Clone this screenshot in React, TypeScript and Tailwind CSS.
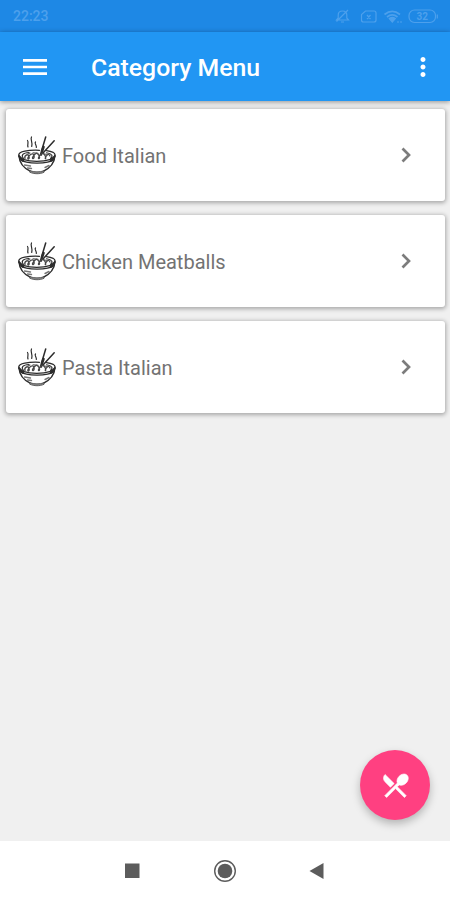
import { MdMenu, MdMoreVert } from 'react-icons/md';

const categories = [
  { id: 1, name: 'Food Italian' },
  { id: 2, name: 'Chicken Meatballs' },
  { id: 3, name: 'Pasta Italian' },
];

function NoodleBowl() {
  return (
    <svg width="40" height="42" viewBox="0 0 40 42" fill="none" stroke="#2c2c2c" strokeLinecap="round" className="shrink-0">
      {/* steam */}
      <path d="M10.500 6.500c1.500 2-.5 4 .5 6.500M14.500 3c-1.500 2.500 1.500 5 .2 9.500M18.500 8c-1.500 1.500 1.500 3 .8 5.500" strokeWidth="1.200" />
      {/* chopsticks */}
      <path d="M28.700 3 L24.500 17M37.200 6.800 L26 19" strokeWidth="1.500" />
      <path d="M26.500 13 L24 20.500" strokeWidth="2.500" />
      {/* rim */}
      <path d="M22.500 16.300C11 15.800 1.800 17.500 1.800 20.800c0 4.200 8 6.500 18 6.500s18.200-2.300 18.200-6.500c0-2.300-3.500-3.400-8.500-4.100" strokeWidth="1.300" />
      <path d="M6.500 24.500C3.500 21 6 19 12 18.500M33.500 24.500c3-2.500 1.500-5-4-5.700" strokeWidth="1.100" />
      {/* noodles */}
      <path d="M8 24.500c-1-3 3-5.500 4-2s-2 3-1 1 5-6 6-2-3 4-1 1 4-5 6-1-2 4 0 1 4-5 6-1-1 4 1 1 3-2.500 4-.5" stroke="#444" strokeWidth="1.300" />
      <path d="M10 20.500l3-1.500M16 18.800l5 .4M27 20l4 .5" stroke="#555" strokeWidth="1.100" />
      {/* bowl */}
      <path d="M1.900 21.500c.5 7.500 5 13 12 16M38 21.500c-.5 7.500-5.500 13-12 16" strokeWidth="1.400" />
      <path d="M3 25.500c6 4.800 28 4.800 34 0" strokeWidth="1.300" />
      <path d="M2.300 22.500l4 4.500M37.600 22.500l-4 4.500" strokeWidth="2" />
      <path d="M13 36.800c4 1.400 10 1.400 14 0v1.500c-4 1.900-10 1.900-14 0z" fill="#888" stroke="#555" strokeWidth=".9" />
      <path d="M7.500 31l6 1M10.500 34l4 .5M28 33.500l4-2" stroke="#777" strokeWidth="1.400" />
    </svg>
  );
}

function StatusIcons() {
  return (
    <svg width="106" height="18" viewBox="0 0 106 18" fill="none" stroke="#4da0ec" strokeWidth="1.200" className="shrink-0">
      {/* muted bell */}
      <path d="M2.500 13h12l-1.700-2V8c0-2.500-1.500-4-4.300-4S4.200 5.500 4.200 8v3l-1.700 2zM7 15h3M2.500 14.500L14 3" />
      {/* missing sim */}
      <path d="M31.500 4H40c1.300 0 2 .6 2 2v7c0 1.300-.7 2-2 2h-10.500c-1.300 0-2-.7-2-2V7.500zM33 8l3.500 4M36.500 8L33 12" />
      {/* wifi */}
      <path d="M50.500 7.500c5-4 10.500-4 15.500 0M53 10c3.500-2.800 7-2.800 10.500 0" strokeWidth="1.700" />
      <path d="M55.300 11.500c2-1.500 4-1.500 6 0l-3 3.500z" fill="#4da0ec" />
      <path d="M63 15h5" strokeDasharray="2 1" />
      {/* battery */}
      <rect x="75" y="3" width="26.500" height="12.500" rx="5.500" />
      <path d="M103.300 7.500v4" />
      <text x="88.300" y="13" textAnchor="middle" fill="#4da0ec" stroke="none" className="font-['Roboto',sans-serif] text-[10px] font-bold">32</text>
    </svg>
  );
}

function ForkSpoon() {
  return (
    <svg width="31" height="31" viewBox="0 0 24 24" fill="currentColor" stroke="currentColor" strokeWidth="0.500" strokeLinejoin="round">
      <path d="M8.100 13.340l2.830-2.830L3.910 3.500c-1.560 1.560-1.560 4.090 0 5.660l4.190 4.180zm6.780-1.810c1.530.71 3.680.21 5.270-1.380 1.910-1.910 2.280-4.650.81-6.120-1.460-1.460-4.200-1.100-6.120.81-1.590 1.590-2.090 3.740-1.380 5.270L3.700 19.870l1.410 1.410L12 14.410l6.880 6.880 1.410-1.410L13.410 13l1.470-1.470z" />
    </svg>
  );
}

function CategoryCard({ name }: { name: string }) {
  return (
    <li className="flex h-[92px] items-center rounded-[3px] bg-white pr-[33px] pl-[11px] shadow-[0_1px_4px_1px_rgba(0,0,0,0.3)]">
      <NoodleBowl />
      <span className="ml-[5px] flex-1 pt-px text-[20px] leading-6 text-[#737373]">{name}</span>
      <svg width="12" height="18" viewBox="0 0 12 18" fill="none" stroke="#7c7c7c" strokeWidth="2.700">
        <path d="M2.500 2.500L9 9l-6.500 6.500" />
      </svg>
    </li>
  );
}

export default function App() {
  return (
    <div className="flex h-[900px] w-[450px] flex-col overflow-hidden bg-[#f0f0f0] font-['Roboto',sans-serif]">
      {/* Status bar */}
      <div className="flex h-8 shrink-0 items-center justify-between bg-[#1e88e5] pr-[10px] pl-[13px]">
        <span className="pt-px text-[14px] font-medium text-[#4da0ec]">22:23</span>
        <StatusIcons />
      </div>

      {/* App bar */}
      <header className="flex h-[69px] shrink-0 items-center bg-[#2196f3] pr-3 pl-[19px] text-white shadow-[0_1px_5px_rgba(0,0,0,0.4)]">
        <button aria-label="Menu">
          <MdMenu size={32} />
        </button>
        <h1 className="ml-10 flex-1 pt-[3px] text-[24.8px] leading-8 font-medium">Category Menu</h1>
        <button aria-label="More">
          <MdMoreVert size={30} />
        </button>
      </header>

      {/* Category list */}
      <main className="relative flex-1">
        <ul className="flex flex-col gap-[14px] pt-2 pr-[5px] pl-[6px]">
          {categories.map((category) => (
            <CategoryCard key={category.id} name={category.name} />
          ))}
        </ul>

        <button
          aria-label="Recipes"
          className="absolute right-5 bottom-[21px] flex size-[70px] items-center justify-center rounded-full bg-[#ff4081] text-white shadow-[0_4px_8px_rgba(0,0,0,0.25)]"
        >
          <ForkSpoon />
        </button>
      </main>

      {/* Navigation buttons */}
      <nav className="flex h-[59px] shrink-0 items-center justify-center gap-[71px] bg-white text-[#5c5c5c]">
        <svg width="18" height="18" viewBox="0 0 18 18" fill="currentColor">
          <rect x="1" y="1.500" width="14.500" height="14.500" />
        </svg>
        <svg width="24" height="24" viewBox="0 0 24 24" fill="currentColor">
          <circle cx="12" cy="12" r="10.300" fill="none" stroke="currentColor" strokeWidth="1.400" />
          <circle cx="12" cy="12" r="7.300" />
        </svg>
        <svg width="18" height="18" viewBox="0 0 18 18" fill="currentColor">
          <path d="M1.500 9L15.500 1v16z" />
        </svg>
      </nav>
    </div>
  );
}
